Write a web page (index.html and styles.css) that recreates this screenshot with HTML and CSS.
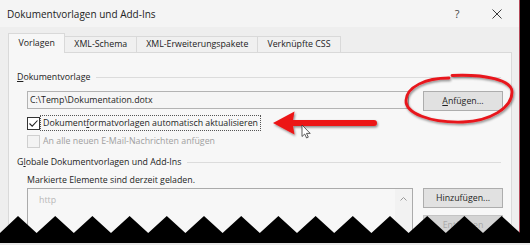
FILE: index.html
```html
<!DOCTYPE html>
<html lang="de">
<head>
  <meta charset="UTF-8">
  <title>Dokumentvorlagen und Add-Ins</title>
  <link rel="stylesheet" href="styles.css">
</head>
<body>

  <div class="shot">
    <div class="dialog">

      <!-- title bar -->
      <div class="titlebar">
        <span class="title">Dokumentvorlagen und Add-Ins</span>
        <span class="help">?</span>
        <span class="close">
          <svg width="10" height="10" viewBox="0 0 10 10"><path d="M0.5 0.5 L9.5 9.5 M9.5 0.5 L0.5 9.5" stroke="#3a3a3a" stroke-width="1" fill="none"/></svg>
        </span>
      </div>

      <!-- tabs -->
      <div class="tabs">
        <div class="tab active">Vorlagen</div>
        <div class="tab">XML-Schema</div>
        <div class="tab">XML-Erweiterungspakete</div>
        <div class="tab">Verknüpfte CSS</div>
      </div>

      <div class="panel">
        <div class="group-head">
          <span><u>D</u>okumentvorlage</span>
          <span class="rule"></span>
        </div>

        <div class="template-row">
          <div class="field">C:\Temp\Dokumentation.dotx</div>
          <button class="btn"><u>A</u>nfügen...</button>
        </div>

        <div class="check">
          <span class="box">
            <svg width="11" height="11" viewBox="0 0 11 11"><path d="M1.5 5.5 L4.2 8.2 L9.5 2.5" stroke="#222" stroke-width="1.1" fill="none"/></svg>
          </span>
          <span class="focus">Dokument<u>f</u>ormatvorlagen automatisch aktualisieren</span>
        </div>

        <div class="check disabled">
          <span class="box"></span>
          <span class="label">An alle neuen E-Mail-Nachrichten anfügen</span>
        </div>

        <div class="group-head second">
          <span>G<u>l</u>obale Dokumentvorlagen und Add-Ins</span>
          <span class="rule"></span>
        </div>

        <div class="hint">Markierte Elemente sind derzeit geladen.</div>

        <div class="list-row">
          <div class="list">
            <div class="items"><span class="item">http</span></div>
            <div class="scroll">
              <svg width="7" height="4" viewBox="0 0 7 4"><path d="M0.5 3.5 L3.5 0.5 L6.5 3.5" stroke="#9a9a9a" stroke-width="1" fill="none"/></svg>
            </div>
          </div>
          <div class="side-btns">
            <button class="btn">Hinzufügen...</button>
            <button class="btn" disabled>Entfernen</button>
          </div>
        </div>
      </div>
    </div>

    <!-- red annotations drawn over the screenshot -->
    <svg class="annot" width="530" height="245" viewBox="0 0 530 245">
      <defs>
        <filter id="shade" x="-10%" y="-30%" width="120%" height="160%">
          <feDropShadow dx="1" dy="1.5" stdDeviation="1" flood-color="#000" flood-opacity="0.45"/>
        </filter>
      </defs>
      <g filter="url(#shade)">
        <path d="M452 75.5 C485 74 512 80 512 92 C512 108 490 121 463 122 C430 123 405 113 406 100 C407 87 425 78 449 78"
              stroke="#e8161c" stroke-width="2.8" fill="none" stroke-linecap="round"/>
        <path d="M273 123 L294.5 111.5 L293 120 L374 120 A3 3 0 0 1 374 126 L293 126 L294.5 134.5 Z" fill="#ec1418"/>
      </g>
      <path d="M302 125 V136.5 L304.7 134 L306.6 138 L308.3 137.2 L306.5 133.4 H310.2 Z"
            fill="#fff" stroke="#333" stroke-width="0.8" stroke-linejoin="round"/>
    </svg>

    <!-- torn bottom edge -->
    <svg class="torn" width="530" height="245" viewBox="0 0 530 245">
      <polygon fill="#000" points="0,233 18,216 36.6,233 55.2,216 73.8,233 92.4,216 111,233 129.6,216 148.2,233 166.8,216 185.4,233 204,216 222.6,233 241.2,216 259.8,233 278.4,216 297,233 315.6,216 334.2,233 352.8,216 371.4,233 390,216 408.6,233 427.2,216 445.8,233 464.4,216 483,233 501.6,216 520.2,233 530,224 530,245 0,245"/>
      <rect x="0" y="243" width="530" height="2" fill="#e9e9e9"/>
    </svg>
  </div>

</body>
</html>
```

FILE: styles.css
```css
* {
  box-sizing: border-box;
}

body {
  margin: 0;
  background: #000;
  font-family: "Segoe UI", "Open Sans", sans-serif;
  font-size: 8.8px;
  color: #1e1e1e;
}

.shot {
  position: relative;
  width: 530px;
  height: 245px;
  overflow: hidden;
  background: #000;
}

.dialog {
  width: 520px;
  height: 245px;
  background: #eeeeee;
  border-right: 1px solid #b44a5a;
}

/* title bar */
.titlebar {
  display: flex;
  align-items: center;
  height: 27px;
  padding: 0 12px 0 7px;
  background: #f4f4f4;
}

.title {
  flex: 1;
  font-size: 10px;
  color: #222;
}

.help {
  width: 20px;
  margin-right: 20px;
  text-align: center;
  font-size: 11px;
  color: #444;
}

.close {
  display: flex;
  justify-content: center;
  width: 20px;
}

/* tabs */
.tabs {
  display: flex;
  height: 19px;
  margin-top: 6px;
  padding-left: 8px;
}

.tab {
  height: 16px;
  margin-top: 3px;
  margin-left: -1px;
  padding: 0 9px;
  line-height: 15px;
  border: 1px solid #d9d9d9;
  border-bottom: none;
  background: #f0f0f0;
  color: #222;
}

.tab.active {
  position: relative;
  z-index: 1;
  height: 20px;
  margin-top: 0;
  margin-left: 0;
  padding: 0 9.5px;
  line-height: 19px;
  background: #f7f7f7;
}

.panel {
  width: 504px;
  height: 200px;
  margin-left: 8px;
  padding: 0 8px;
  border: 1px solid #d9d9d9;
  background: #f7f7f7;
}

/* group headings with a rule */
.group-head {
  display: flex;
  align-items: center;
  height: 14px;
  margin-top: 17px;
  line-height: 14px;
  color: #222;
}

.group-head.second {
  margin-top: 6px;
}

.rule {
  flex: 1;
  height: 1px;
  margin: 0 2px 0 6px;
  background: #dcdcdc;
}

.template-row {
  display: flex;
  margin-top: 7px;
  padding-left: 10px;
}

.field {
  flex: 1;
  height: 18px;
  padding-left: 2px;
  line-height: 16px;
  border: 1px solid #b3b3b3;
  background: #f5f5f5;
}

.btn {
  width: 80px;
  height: 20px;
  margin-left: 14px;
  padding: 0;
  font-family: inherit;
  font-size: 8.8px;
  color: #1e1e1e;
  background: #e1e1e1;
  border: 1px solid #adadad;
}

.btn:disabled {
  color: #a8a8a8;
  background: #d4d4d4;
  border-color: #c4c4c4;
}

/* checkboxes */
.check {
  display: flex;
  align-items: center;
  height: 16px;
  margin-top: 4px;
  padding-left: 10px;
}

.check.disabled {
  margin-top: 2px;
  color: #a0a0a0;
}

.box {
  display: flex;
  align-items: center;
  justify-content: center;
  width: 13px;
  height: 13px;
  border: 1px solid #333;
  background: #fff;
}

.check.disabled .box {
  border-color: #cfcfcf;
  background: #f3f3f3;
}

.focus {
  height: 16px;
  padding: 0 2px;
  line-height: 14px;
  border: 1px dotted #555;
}

.label {
  margin-left: 3px;
}

.hint {
  height: 14px;
  margin-top: 4px;
  padding-left: 10px;
  line-height: 14px;
}

.list-row {
  display: flex;
  align-items: flex-start;
  margin-top: 1px;
  padding-left: 10px;
}

.list {
  display: flex;
  flex: 1;
  height: 60px;
  border: 1px solid #ababab;
  background: #f7f7f7;
}

.items {
  flex: 1;
  padding: 5px 11px;
}

.item {
  color: #b8b8b8;
}

.scroll {
  display: flex;
  justify-content: center;
  width: 17px;
  padding-top: 8px;
  background: #f2f2f2;
}

.side-btns {
  display: flex;
  flex-direction: column;
  gap: 7px;
  margin-left: 10px;
}

.side-btns .btn {
  margin-left: 0;
}

/* overlays */
.annot,
.torn {
  position: absolute;
  left: 0;
  top: 0;
}
```
